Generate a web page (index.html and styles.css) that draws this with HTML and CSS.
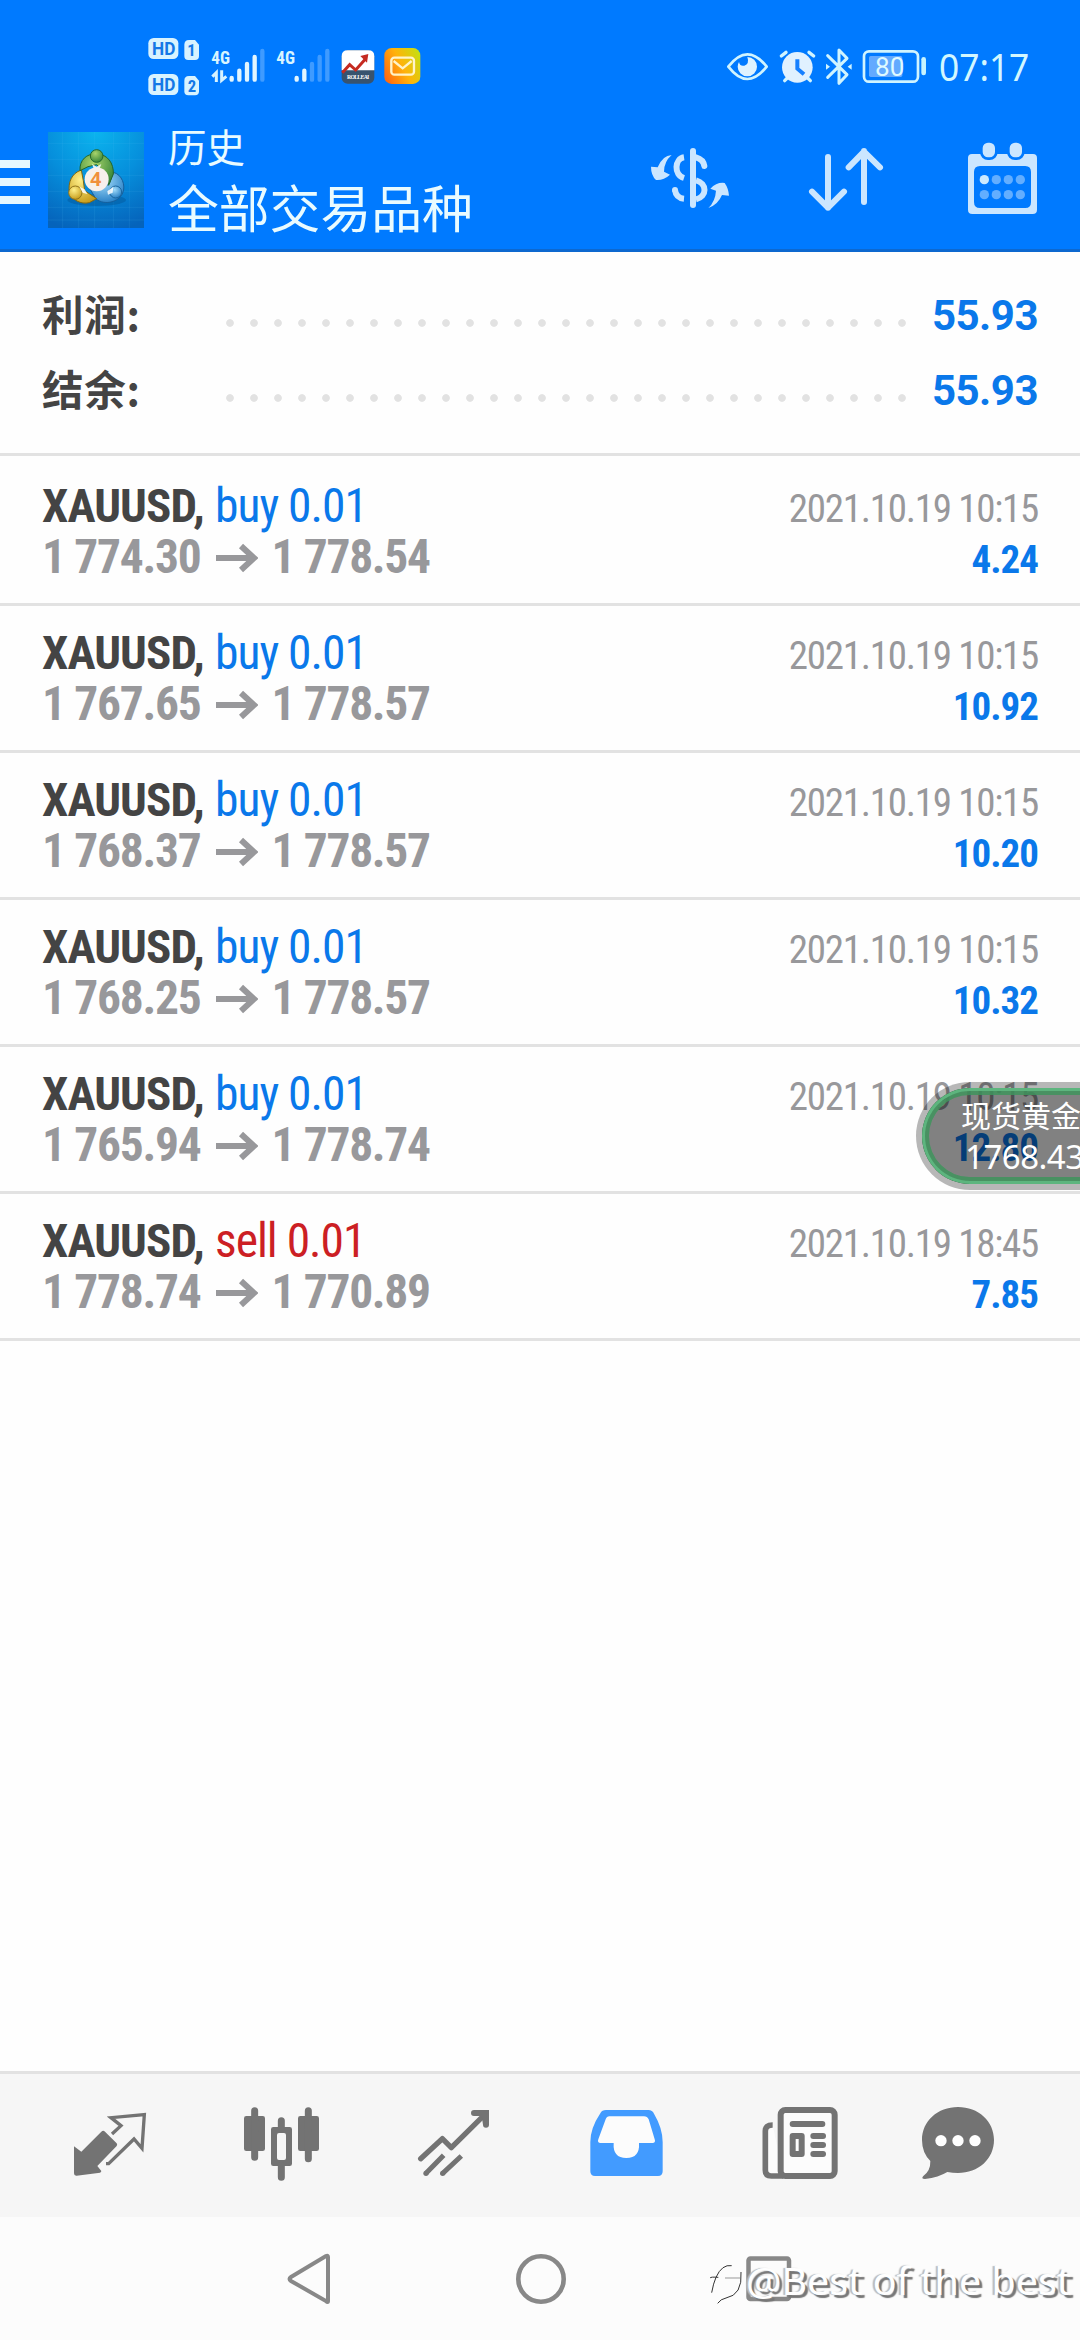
FILE: index.html
```html
<!DOCTYPE html>
<html lang="zh-CN">
<head>
<meta charset="utf-8">
<title>历史</title>
<link rel="stylesheet" href="styles.css">
</head>
<body>
<div class="screen">
  <header class="header">
    <div class="status">
      <svg class="status-left" viewBox="50 45 825 190" width="275" height="63.33">
        <g fill="#d8f3ff">
          <rect x="54" y="54" width="90" height="63" rx="16"/>
          <path d="M176 60h18l12 14v34q0 12-12 12h-20q-12 0-12-12V74q0-14 14-14z"/>
          <rect x="54" y="162" width="90" height="63" rx="16"/>
          <path d="M176 168h18l12 14v32q0 12-12 12h-20q-12 0-12-12v-32q0-14 14-14z"/>
        </g>
        <g class="badge-text">
          <text x="65" y="105" textLength="70" lengthAdjust="spacingAndGlyphs">HD</text>
          <text x="65" y="213" textLength="70" lengthAdjust="spacingAndGlyphs">HD</text>
          <text class="sim" x="171" y="108">1</text>
          <text class="sim" x="172" y="216">2</text>
        </g>
        <g class="net-text">
          <text x="243" y="131" textLength="56" lengthAdjust="spacingAndGlyphs">4G</text>
          <text x="438" y="131" textLength="56" lengthAdjust="spacingAndGlyphs">4G</text>
        </g>
        <g fill="none" stroke="#d8f3ff" stroke-width="9"><path d="M246 170l12-12v28M274 151v30l14-12"/></g>
        <g stroke="#e2f6ff" stroke-width="13" stroke-linecap="round">
          <path d="M304 174v5M327 152v27M350 132v47M373 111v68M499 174v5M522 152v27"/>
          <path stroke="#3f9bff" d="M396 93v86M545 132v47M568 111v68M591 93v86"/>
        </g>
        <rect x="634" y="91" width="98" height="100" rx="18" fill="#37536f"/>
        <path d="M634 151v-42q0-18 18-18h62q18 0 18 18v42z" fill="#fff"/>
        <path d="M636 158l22-24 18 16 30-34" fill="none" stroke="#c52a20" stroke-width="9"/>
        <path d="M690 108l24-6-4 26z" fill="#c52a20"/>
        <text class="tiny" x="650" y="176" textLength="67">ROLLEAI</text>
        <defs>
          <linearGradient id="mail" x1="0" y1=".75" x2="1" y2=".25"><stop offset="0" stop-color="#ff6a10"/><stop offset=".5" stop-color="#ffb30a"/><stop offset="1" stop-color="#c9dc12"/></linearGradient>
        </defs>
        <rect x="762" y="84" width="108" height="108" rx="22" fill="url(#mail)"/>
        <rect x="783" y="113" width="68" height="51" rx="9" fill="none" stroke="#fff3c8" stroke-width="7"/>
        <path d="M790 123l27 22 27-22" fill="none" stroke="#fff3c8" stroke-width="7"/>
      </svg>
      <svg class="status-right" viewBox="75 75 925 130" width="308.33" height="43.33">
        <g fill="none" stroke="#d0f4ff" stroke-width="8" stroke-linejoin="round" stroke-linecap="round">
          <path d="M85 140Q142 66 200 140Q142 214 85 140z"/>
          <path d="M244 108l14-11M341 108l-14-11" stroke-width="10"/>
          <path d="M254 182l8-8M331 182l-8-8" stroke-width="10"/>
          <path d="M383 107l58 57-24 26V90l24 25-58 57" stroke-width="9"/>
          <rect x="492" y="94" width="162" height="91" rx="15" stroke-width="8"/>
        </g>
        <path d="M142 111A29 29 0 1 1 113 140Q113 132 117 126Q120 140 133 137Q149 131 142 111z" fill="#dff3ff"/>
        <circle cx="292" cy="142" r="46" fill="#e0f1ff"/>
        <path d="M292 118v28l20 17" fill="none" stroke="#1680ff" stroke-width="12"/>
        <path d="M378 131l12 9-12 9zM455 131l-12 9 12 9z" fill="#d0f4ff"/>
        <rect x="507" y="108" width="100" height="63" rx="5" fill="#63aaff"/>
        <rect x="664" y="111" width="14" height="55" rx="7" fill="#c7f4ff"/>
        <text class="batt" x="525" y="169" textLength="88" lengthAdjust="spacingAndGlyphs">80</text>
        <text class="clock" x="717" y="184" textLength="271" lengthAdjust="spacingAndGlyphs">07:17</text>
      </svg>
    </div>
    <div class="appbar">
      <div class="menu"><i></i><i></i><i></i></div>
      <svg class="logo" viewBox="144 66 288 288" width="96" height="96">
        <defs>
          <radialGradient id="sky" cx=".5" cy="0" r="1.05"><stop offset="0" stop-color="#0bb4ee"/><stop offset=".5" stop-color="#068fdc"/><stop offset="1" stop-color="#0563bb"/></radialGradient>
          <radialGradient id="g" cx=".4" cy=".3" r=".8"><stop offset="0" stop-color="#a8d46b"/><stop offset="1" stop-color="#2b7d33"/></radialGradient>
          <radialGradient id="y" cx=".4" cy=".3" r=".8"><stop offset="0" stop-color="#fff08a"/><stop offset="1" stop-color="#c19410"/></radialGradient>
          <radialGradient id="b" cx=".4" cy=".3" r=".8"><stop offset="0" stop-color="#a2dcfb"/><stop offset="1" stop-color="#1b76c0"/></radialGradient>
        </defs>
        <path d="M144 66h288v288H144z" fill="url(#sky)"/>
        <path d="M188 66v288M236 66v288M284 66v288M340 66v288M388 66v288M144 100h288M144 148h288M144 196h288M144 244h288M144 292h288M144 330h288" stroke="#5cc6f4" stroke-opacity=".12" stroke-width="3" fill="none"/>
        <ellipse cx="290" cy="270" rx="88" ry="18" fill="#044a86" opacity=".35"/>
        <g stroke-width="3">
          <path d="M340 187c26 6 38 40 28 62-12 28-54 38-80 18l-18-30 38-2 20-14z" fill="url(#b)" stroke="#155f9c"/>
          <path d="M244 180c-30 10-40 38-36 66 8 24 34 38 60 32l22-12-36-24-4-30z" fill="url(#y)" stroke="#806712"/>
          <path d="M240 182c-2-32 20-52 50-50 32 0 52 28 50 60l-14 34-6-30-30-32-26 6z" fill="url(#g)" stroke="#24672b"/>
          <circle cx="290" cy="138" r="19" fill="url(#g)" stroke="#24672b"/>
          <circle cx="226" cy="248" r="20" fill="url(#y)" stroke="#91741a"/>
          <circle cx="347" cy="246" r="18" fill="url(#b)" stroke="#1a669f"/>
        </g>
        <path d="M276 162l14 8 14-8-6 16h-16zM238 230l16 8 8 14-14-4zM322 244l18-14-2 18-14 6z" fill="#fff" opacity=".85"/>
        <circle cx="290" cy="208" r="36" fill="#f7f0ec"/>
        <text class="four" x="271" y="229">4</text>
      </svg>
      <div class="titles">
        <div class="title-small">历史</div>
        <div class="title-big">全部交易品种</div>
      </div>
      <svg class="act-dollar" viewBox="84 60 252 240" width="84" height="80">
        <g fill="none" stroke="#cbe6ff" stroke-width="18">
          <path d="M219 93v162" stroke-linecap="round"/>
          <path d="M192 112C164 116 160 164 192 174"/>
          <path d="M165 210Q168 234 192 236"/>
          <path d="M165 210v0M228 112Q250 118 253 138" stroke-linecap="round"/>
          <path d="M228 181C262 190 262 230 228 238"/>
        </g>
        <path d="M155 105Q128 106 113 142L93 140Q93 166 108 180Q130 182 150 164L132 155Q132 125 155 105zM265 264Q294 254 306 225L327 227Q325 204 314 189Q290 186 271 206L288 212Q286 244 265 264z" fill="#cbe6ff"/>
      </svg>
      <svg class="act-sort" viewBox="561 60 234 240" width="78" height="80">
        <path d="M624 111v152M576 215l48 48 48-48M732 246V93M686 142l46-47 48 47" fill="none" stroke="#cbe6ff" stroke-width="18" stroke-linecap="round" stroke-linejoin="round"/>
      </svg>
      <svg class="act-cal" viewBox="1035 60 225 240" width="75" height="80">
        <path fill-rule="evenodd" d="M1056 102H1239q12 0 12 12V269q0 13-13 13H1057q-13 0-13-13V114q0-12 12-12zM1080 138q-18 0-18 18v90q0 18 18 18h136q17 0 17-18v-90q0-18-17-18z" fill="#cbe6ff"/>
        <g fill="#cbe6ff" stroke="#007aff" stroke-width="8"><rect x="1084" y="64" width="45" height="52" rx="20"/><rect x="1165" y="64" width="45" height="52" rx="20"/></g>
        <g fill="#63aeff"><circle cx="1093" cy="179" r="14" fill="#cbeaff"/><circle cx="1129" cy="179" r="14"/><circle cx="1165" cy="179" r="14"/><circle cx="1201" cy="179" r="14"/><circle cx="1093" cy="224" r="14"/><circle cx="1129" cy="224" r="14"/><circle cx="1165" cy="224" r="14"/><circle cx="1201" cy="224" r="14"/></g>
      </svg>
    </div>
  </header>

  <section class="summary">
    <div class="sum-row"><span class="sum-label">利润:</span><span class="dots"></span><span class="sum-value">55.93</span></div>
    <div class="sum-row"><span class="sum-label">结余:</span><span class="dots"></span><span class="sum-value">55.93</span></div>
  </section>

  <main class="deals">
    <article class="deal">
      <div class="line"><span class="symbol">XAUUSD,</span><span class="side buy">buy 0.01</span><time class="time">2021.10.19 10:15</time></div>
      <div class="line"><span class="price">1 774.30</span><svg class="arrow" viewBox="0 0 42 30"><path d="M0 15h38M25 3l13 12-13 12"/></svg><span class="price">1 778.54</span><span class="profit">4.24</span></div>
    </article>
    <article class="deal">
      <div class="line"><span class="symbol">XAUUSD,</span><span class="side buy">buy 0.01</span><time class="time">2021.10.19 10:15</time></div>
      <div class="line"><span class="price">1 767.65</span><svg class="arrow" viewBox="0 0 42 30"><path d="M0 15h38M25 3l13 12-13 12"/></svg><span class="price">1 778.57</span><span class="profit">10.92</span></div>
    </article>
    <article class="deal">
      <div class="line"><span class="symbol">XAUUSD,</span><span class="side buy">buy 0.01</span><time class="time">2021.10.19 10:15</time></div>
      <div class="line"><span class="price">1 768.37</span><svg class="arrow" viewBox="0 0 42 30"><path d="M0 15h38M25 3l13 12-13 12"/></svg><span class="price">1 778.57</span><span class="profit">10.20</span></div>
    </article>
    <article class="deal">
      <div class="line"><span class="symbol">XAUUSD,</span><span class="side buy">buy 0.01</span><time class="time">2021.10.19 10:15</time></div>
      <div class="line"><span class="price">1 768.25</span><svg class="arrow" viewBox="0 0 42 30"><path d="M0 15h38M25 3l13 12-13 12"/></svg><span class="price">1 778.57</span><span class="profit">10.32</span></div>
    </article>
    <article class="deal">
      <div class="line"><span class="symbol">XAUUSD,</span><span class="side buy">buy 0.01</span><time class="time">2021.10.19 10:15</time></div>
      <div class="line"><span class="price">1 765.94</span><svg class="arrow" viewBox="0 0 42 30"><path d="M0 15h38M25 3l13 12-13 12"/></svg><span class="price">1 778.74</span><span class="profit">12.80</span></div>
    </article>
    <article class="deal">
      <div class="line"><span class="symbol">XAUUSD,</span><span class="side sell">sell 0.01</span><time class="time">2021.10.19 18:45</time></div>
      <div class="line"><span class="price">1 778.74</span><svg class="arrow" viewBox="0 0 42 30"><path d="M0 15h38M25 3l13 12-13 12"/></svg><span class="price">1 770.89</span><span class="profit">7.85</span></div>
    </article>
  </main>

  <nav class="tabs">
    <svg class="tab-quotes" viewBox="90 132 240 240" width="80" height="80" fill="#737373">
      <path d="M102 259L124 275L184 215q6-5 11 0L230 250q3 4 0 8L172 318L184 333Q184 337 180 338L110 347Q102 348 102 340z"/>
      <path d="M216 222L243 197L213 173L313 164L306 265L282 237L206 311H198" fill="none" stroke="#737373" stroke-width="10"/>
    </svg>
    <svg class="tab-charts" viewBox="600 132 240 240" width="80" height="80" fill="#737373">
      <rect x="612" y="168" width="63" height="105" rx="7"/><rect x="774" y="168" width="63" height="105" rx="7"/>
      <path fill-rule="evenodd" d="M700 201h49q7 0 7 7v103q0 7-7 7h-49q-7 0-7-7V208q0-7 7-7zM717 219q-6 0-6 6v69q0 6 6 6h15q6 0 6-6v-69q0-6-6-6z"/>
      <path d="M644 152v140M805 152v144M724 182v22M724 317v35" stroke="#737373" stroke-width="21" stroke-linecap="round"/>
    </svg>
    <svg class="tab-trade" viewBox="1125 132 240 240" width="80" height="80">
      <path d="M1142 296L1207 236L1234 263L1334 164" fill="none" stroke="#737373" stroke-width="16" stroke-linecap="round" stroke-linejoin="round"/>
      <path d="M1302 150H1347V194q0 9-9 9t-9-9L1325 168H1302q-9 0-9-9t9-9z" fill="#737373"/>
      <path d="M1158 340L1211 286M1208 340L1264 288" stroke="#737373" stroke-width="15" stroke-linecap="butt"/>
      <circle cx="1158" cy="340" r="8" fill="#737373"/><circle cx="1208" cy="340" r="8" fill="#737373"/>
    </svg>
    <svg class="tab-history" viewBox="141 132 240 240" width="80" height="80">
      <path d="M198 150H325Q337 150 342 161Q368 205 368 246V334q0 14-14 14H165q-14 0-14-14V246Q151 205 181 160Q186 150 198 150z" fill="#429bff"/>
      <path d="M208 169H312Q322 169 326 178L344 238Q348 249 337 249H297Q300 294 259 294T221 249H182Q171 249 175 238L197 178Q200 169 208 169z" fill="#fcfcfc"/>
    </svg>
    <svg class="tab-news" viewBox="660 132 240 240" width="80" height="80">
      <path d="M698 195Q676 195 676 213V330Q676 348 694 348H730" fill="#fcfcfc" stroke="#737373" stroke-width="17"/>
      <rect x="722" y="150" width="162" height="198" rx="14" fill="#fcfcfc" stroke="#737373" stroke-width="18"/>
      <g fill="#737373"><rect x="749" y="183" width="107" height="18" rx="9"/><rect x="811" y="219" width="47" height="18" rx="9"/><rect x="811" y="246" width="47" height="18" rx="9"/><rect x="811" y="273" width="47" height="18" rx="9"/></g>
      <rect x="758" y="228" width="27" height="54" fill="#fcfcfc" stroke="#737373" stroke-width="18" stroke-linejoin="round"/>
    </svg>
    <svg class="tab-chat" viewBox="1134 132 240 240" width="80" height="80">
      <path d="M1254 141C1315 141 1362 183 1362 240S1315 339 1254 339Q1238 339 1222 336Q1196 352 1155 357Q1142 357 1150 348Q1172 332 1171 303Q1146 278 1146 240C1146 183 1193 141 1254 141z" fill="#737373"/>
      <g fill="#fff"><circle cx="1203" cy="242" r="17"/><circle cx="1254" cy="242" r="17"/><circle cx="1305" cy="242" r="17"/></g>
    </svg>
  </nav>

  <footer class="sysnav">
    <svg width="50" height="56" viewBox="0 0 50 56"><path d="M43 6v44q0 2-2 0L6 30q-3-2 0-4L41 5q2-1 2 1z" fill="none" stroke="#888" stroke-width="4"/></svg>
    <svg width="50" height="50" viewBox="0 0 50 50"><circle cx="25" cy="25" r="22.7" fill="none" stroke="#888" stroke-width="4.6"/></svg>
    <svg width="46" height="46" viewBox="0 0 46 46"><rect x="2.5" y="2.5" width="40.5" height="40.5" rx="2" fill="none" stroke="#888" stroke-width="4.5"/></svg>
  </footer>

  <aside class="float">
    <div class="float-name">现货黄金</div>
    <div class="float-price">1768.43</div>
  </aside>
  <svg class="mark" viewBox="0 36 1140 180" width="380" height="60">
    <g fill="none" stroke="#333" stroke-width="3">
      <path d="M35 158Q40 130 48 112Q66 72 95 77M30 114Q32 110 55 112M123 96Q128 165 78 174Q62 177 53 190"/>
      <path d="M75 114h45" stroke="#999"/>
    </g>
    <text class="mark-text" x="138" y="164" textLength="975" lengthAdjust="spacingAndGlyphs">@Best of the best</text>
  </svg>
</div>
</body>
</html>
```
FILE: styles.css
```css
* { box-sizing: border-box; }
body { margin: 0; background: #fff; }
svg { display: block; flex: none; }
.screen {
  position: relative;
  display: flex;
  flex-direction: column;
  width: 1080px;
  height: 2340px;
  overflow: hidden;
  background: #fefefe;
  font-family: Roboto, "Noto Sans CJK SC", sans-serif;
}

/* header */
.header { height: 252px; background: #007aff; border-bottom: 3px solid #0d68cf; flex: none; }
.status { display: flex; align-items: flex-start; justify-content: space-between; height: 110px; padding: 35px 46.7px 0 146.7px; }
.status-right { margin-top: 10px; overflow: visible; }
.badge-text { font: 700 53px Roboto, sans-serif; fill: #1478e6; }
.badge-text .sim { font-size: 50px; font-stretch: 75%; }
.net-text { font: 700 56px Roboto, sans-serif; font-stretch: 75%; fill: #d8f5ff; }
.tiny { font: 700 17px "Liberation Serif", serif; fill: #fff; }
.batt { font: 400 80px Roboto, sans-serif; fill: #dffaff; }
.clock { font: 400 114px "Noto Sans", sans-serif; fill: #d2f7ff; }
.appbar { display: flex; align-items: flex-start; padding-top: 20px; }
.menu { display: flex; flex-direction: column; gap: 10px; width: 30px; margin-top: 30px; }
.menu i { height: 8px; background: #e6f8ff; }
.logo { margin: 2px 0 0 18px; }
.four { font: 700 58px "Noto Sans", sans-serif; fill: #f0903c; }
.titles { width: 478px; margin: -4px 0 0 24px; color: #e9fbff; font-family: "Noto Sans CJK SC", sans-serif; }
.title-small { font-size: 38.5px; line-height: 38px; }
.title-big { margin-top: 12px; font-size: 50.8px; line-height: 60px; }
.act-dollar { margin-left: 2px; margin-top: 10px; }
.act-sort { margin: 10px 0 0 75px; }
.act-cal { margin: 10px 0 0 80px; }

/* totals */
.summary { height: 204px; padding: 25px 42px 0 42px; border-bottom: 3px solid #e2e2e2; flex: none; }
.sum-row { display: flex; align-items: center; height: 75px; }
.sum-label { width: 176px; margin-top: -3px; font: 700 41.5px/60px "Noto Sans CJK SC", sans-serif; letter-spacing: .8px; color: #444; }
.dots { width: 696px; height: 8px; margin-top: 17px; background: radial-gradient(circle at 12px 4px, #e2e2e2 3.4px, transparent 4.2px) 0 0 / 24px 8px repeat-x; }
.sum-value { margin: 2px 0 0 auto; font-weight: 700; font-size: 42px; letter-spacing: -.5px; color: #0a78ea; }

/* deals */
.deals { flex: 1; padding-top: 3px; font-family: "Roboto Condensed", Roboto, sans-serif; font-stretch: 75%; }
.deal { height: 147px; padding: 21px 42px 0; border-bottom: 3px solid #e2e2e2; }
.line { display: flex; align-items: baseline; height: 51px; line-height: 52px; white-space: pre; }
.symbol { width: 173px; font-weight: 700; font-size: 47px; letter-spacing: -.9px; color: #444; }
.side { font-size: 47.5px; letter-spacing: -1px; }
.buy { color: #0a78ea; }
.sell { color: #cc1f24; }
.time { margin-left: auto; font-size: 39px; letter-spacing: -1.28px; color: #98989b; }
.price { font-weight: 700; font-size: 47.5px; letter-spacing: -1.3px; color: #98989b; }
.arrow { width: 42px; height: 30px; margin: 0 13px 0 16px; fill: none; stroke: #98989b; stroke-width: 6; }
.profit { margin-left: auto; font-weight: 700; font-size: 39px; letter-spacing: -1px; color: #0a78ea; }

/* tabs */
.tabs { display: flex; height: 146px; padding: 30px 0 0 70px; background: #f6f6f6; border-top: 3px solid #e2e2e2; flex: none; }
.tab-charts { margin-left: 90px; }
.tab-trade { margin-left: 95px; }
.tab-history { margin-left: 92px; }
.tab-news { margin-left: 93px; }
.tab-chat { margin-left: 78px; }

/* system navigation */
.sysnav { display: flex; align-items: center; justify-content: space-between; height: 123px; padding: 0 288px 0 285px; background: #fcfcfc; flex: none; }

/* floating quote */
.float {
  position: absolute;
  left: 916px;
  top: 1082px;
  width: 220px;
  height: 108px;
  padding: 9px 0 0 37px;
  border: 6px solid rgba(0, 0, 0, .28);
  border-radius: 54px;
  background: rgba(0, 0, 0, .49) padding-box;
  box-shadow: inset 0 0 0 3px #5db57e, inset 0 0 0 7px rgba(64, 148, 93, .85);
  color: #fff;
  white-space: nowrap;
}
.float-name { margin-left: 2px; font: 30px/34px "Noto Sans CJK SC", sans-serif; }
.float-price { margin: 8px 0 0 6px; font: 33px/36px "Noto Sans", sans-serif; letter-spacing: -.5px; }

/* watermark */
.mark { position: absolute; left: 700px; top: 2252px; }
.mark-text { font: 116px "Noto Sans", sans-serif; fill: #fff; text-shadow: 3px 3px 1px #777, -2px 0 1px #bbb; }
```
